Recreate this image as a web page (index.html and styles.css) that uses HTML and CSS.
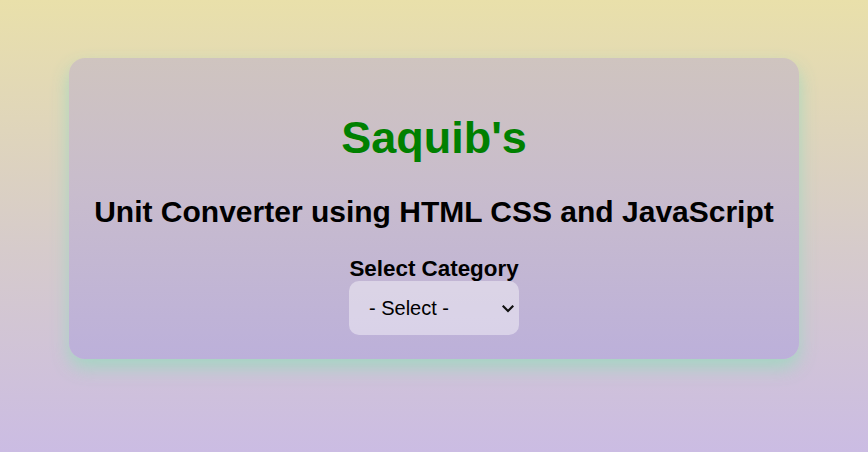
FILE: index.html
```html
<!DOCTYPE html>
<html lang="en">
<head>
<meta charset="utf-8">
<title>Unit Converter</title>
<link rel="stylesheet" href="styles.css">
</head>
<body>
  <main class="card">
    <h1 class="title">Saquib's</h1>
    <h2 class="subtitle">Unit Converter using HTML CSS and JavaScript</h2>
    <label class="cat-label" for="category">Select Category</label>
    <div class="select-wrap">
      <select id="category" class="cat-select">
        <option>- Select -</option>
        <option>Length</option>
        <option>Weight</option>
        <option>Temperature</option>
      </select>
      <svg class="chevron" width="12" height="8" viewBox="0 0 12 8" aria-hidden="true">
        <path d="M1.5 1.5 L6 6 L10.5 1.5" fill="none" stroke="#111" stroke-width="2.2" stroke-linecap="square"/>
      </svg>
    </div>
  </main>
</body>
</html>
```

FILE: styles.css
```css
html, body {
  margin: 0;
  padding: 0;
}

body {
  min-height: 100vh;
  background: linear-gradient(180deg, #e9e0aa 0%, #d6cbcb 55%, #cbbce3 100%);
  font-family: "Liberation Sans", Arial, sans-serif;
  overflow: hidden;
}

.card {
  width: 730px;
  margin: 58px auto 0;
  box-sizing: border-box;
  padding: 54px 20px 24px;
  border-radius: 16px;
  background: linear-gradient(180deg, #cfc4bf 0%, #c8bccd 45%, #bcb0da 100%);
  box-shadow: 0 9px 18px rgba(160, 215, 192, 0.9);
  display: flex;
  flex-direction: column;
  align-items: center;
  text-align: center;
}

.title {
  margin: 0;
  font-size: 45px;
  line-height: 1.15;
  font-weight: bold;
  color: #008000;
}

.subtitle {
  margin: 31px 0 0;
  font-size: 30px;
  line-height: 1.15;
  font-weight: bold;
  color: #000;
}

.cat-label {
  display: block;
  margin-top: 27px;
  font-size: 22.4px;
  line-height: 1.12;
  font-weight: bold;
  color: #000;
}

.select-wrap {
  position: relative;
  width: 170px;
  height: 54px;
}

.cat-select {
  -webkit-appearance: none;
  appearance: none;
  width: 100%;
  height: 100%;
  border: none;
  outline: none;
  border-radius: 10px;
  background: rgba(255, 255, 255, 0.42);
  padding: 0 30px 0 20px;
  font-family: "Liberation Sans", Arial, sans-serif;
  font-size: 20px;
  color: #000;
}

.chevron {
  position: absolute;
  right: 5px;
  top: 24px;
  pointer-events: none;
}
```
